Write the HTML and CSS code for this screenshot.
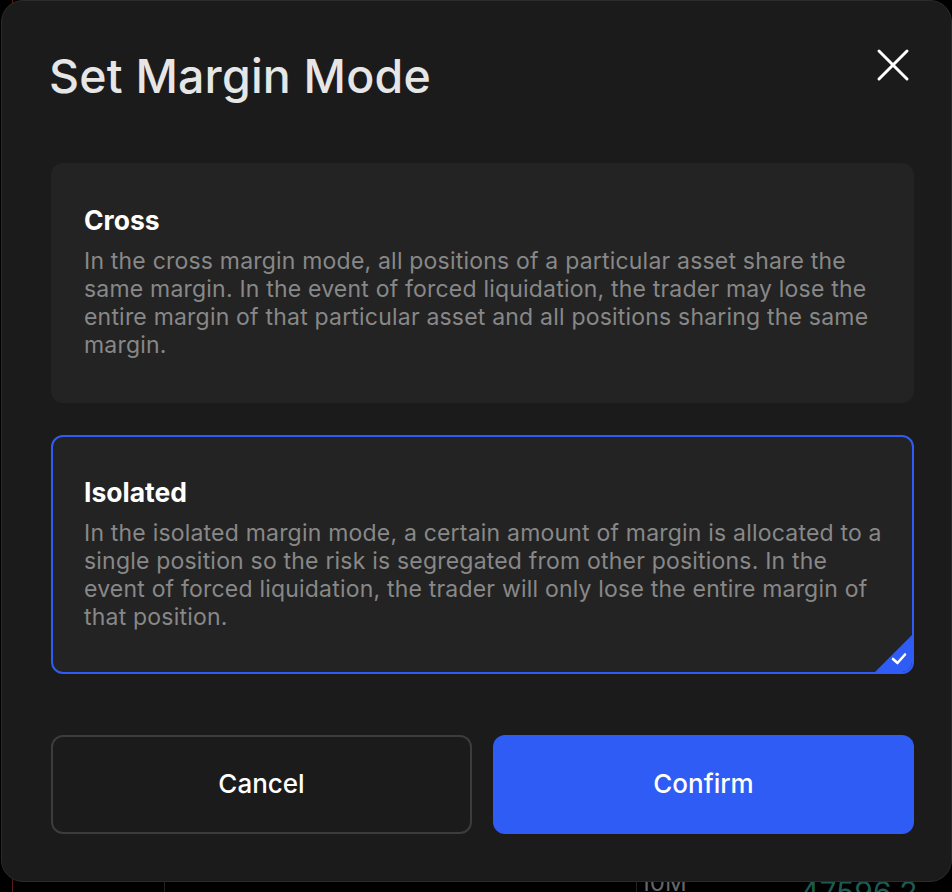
FILE: index.html
```html
<!DOCTYPE html>
<html lang="en">
<head>
  <meta charset="UTF-8">
  <meta name="viewport" content="width=device-width, initial-scale=1.0">
  <title>Set Margin Mode</title>
  <link rel="stylesheet" href="styles.css">
</head>
<body>

  <!-- Grafico por tras do modal -->
  <div class="chart">
    <span class="grid-line line-a"></span>
    <span class="grid-line line-b"></span>
    <span class="grid-line line-c"></span>
    <span class="chart-vol">10M</span>
    <span class="chart-price">47596.2</span>
  </div>

  <div class="modal">
    <div class="modal-header">
      <h1>Set Margin Mode</h1>
      <button class="close-btn" aria-label="Close">
        <svg width="34" height="34" viewBox="0 0 34 34">
          <path d="M3 3 L31 31 M31 3 L3 31" stroke="#fff" stroke-width="3" stroke-linecap="round" fill="none"/>
        </svg>
      </button>
    </div>

    <div class="option">
      <h2>Cross</h2>
      <p>In the cross margin mode, all positions of a particular asset share the same margin. In the event of forced liquidation, the trader may lose the entire margin of that particular asset and all positions sharing the same margin.</p>
    </div>

    <div class="option selected">
      <h2>Isolated</h2>
      <p>In the isolated margin mode, a certain amount of margin is allocated to a single position so the risk is segregated from other positions. In the event of forced liquidation, the trader will only lose the entire margin of that position.</p>
      <svg class="check" width="37" height="37" viewBox="0 0 37 37">
        <path d="M37 0 L37 37 L0 37 Z" fill="#2f5cf5"/>
        <path d="M18 24 L22.5 28 L30 19.5" stroke="#fff" stroke-width="2.6" stroke-linecap="round" stroke-linejoin="round" fill="none"/>
      </svg>
    </div>

    <div class="actions">
      <button class="btn btn-cancel">Cancel</button>
      <button class="btn btn-confirm">Confirm</button>
    </div>
  </div>

</body>
</html>
```

FILE: styles.css
```css
* {
  margin: 0;
  padding: 0;
  box-sizing: border-box;
}
html, body {
  width: 100%;
  height: 100%;
  background-color: #000;
  font-family: 'Inter', 'Noto Sans', sans-serif;
  color: #fff;
  overflow: hidden;
}
body {
  position: relative;
}

/* Grafico ao fundo */
.chart {
  position: absolute;
  inset: 0;
}
.grid-line {
  position: absolute;
  top: 0;
  bottom: 0;
  width: 1px;
  background-color: #222;
}
.line-a { left: 12px; background-color: #5a1b1b; }
.line-b { left: 164px; }
.line-c { left: 636px; }
.chart-vol {
  position: absolute;
  left: 640px;
  top: 868px;
  font-size: 24px;
  color: #666;
}
.chart-price {
  position: absolute;
  left: 800px;
  top: 874px;
  font-size: 30px;
  color: #1c5a52;
}

/* Modal */
.modal {
  position: absolute;
  left: 1px;
  top: 0;
  width: 951px;
  height: 882px;
  background-color: #1b1b1b;
  border: 1px solid #2b2b2b;
  border-radius: 22px;
  padding: 0 37px 0 49px;
  display: flex;
  flex-direction: column;
}
.modal-header {
  display: flex;
  justify-content: space-between;
  align-items: flex-start;
  height: 162px;
  padding-top: 45px;
}
.modal-header h1 {
  font-size: 46.5px;
  font-weight: 500;
  line-height: 60px;
  color: #e6e6e6;
  margin-left: -2px;
  letter-spacing: 0.2px;
}
.close-btn {
  background: none;
  border: none;
  cursor: pointer;
  margin-top: 2px;
  margin-right: 4px;
  width: 34px;
  height: 34px;
}

.option {
  position: relative;
  background-color: #232323;
  border: 2px solid #232323;
  border-radius: 12px;
  padding: 39px 24px 40px 31px;
  overflow: hidden;
  height: 240px;
}
.option + .option {
  margin-top: 32px;
}
.option h2 {
  font-size: 26.5px;
  font-weight: 700;
  line-height: 32px;
  margin-bottom: 11px;
}
.option p {
  font-size: 23px;
  line-height: 28px;
  color: #888;
  letter-spacing: 0.2px;
}
.option.selected {
  border-color: #2f5cf5;
  height: 239px;
}
.check {
  position: absolute;
  right: 0;
  bottom: 0;
}

.actions {
  display: grid;
  grid-template-columns: 1fr 1fr;
  gap: 21px;
  margin-top: 61px;
}
.btn {
  height: 99px;
  border-radius: 12px;
  font-family: inherit;
  font-size: 26px;
  font-weight: 500;
  color: #fff;
  cursor: pointer;
  padding-bottom: 2px;
}
.btn-cancel {
  background-color: transparent;
  border: 2px solid #3c3c3c;
}
.btn-confirm {
  background-color: #2f5cf5;
  border: none;
}
```
